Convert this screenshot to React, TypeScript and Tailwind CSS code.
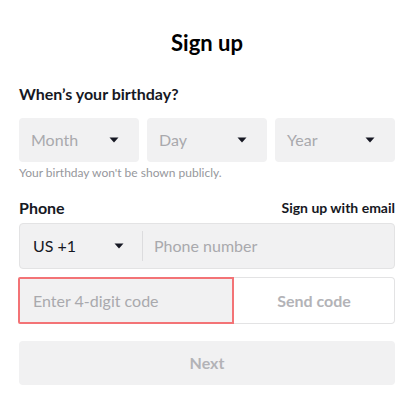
import React from "react";

function Caret() {
  return (
    <svg width="10" height="6" viewBox="0 0 10 6" className="shrink-0" aria-hidden>
      <path d="M0.5 0.5h9L5 5.5z" fill="#161823" />
    </svg>
  );
}

function SelectBox({ label }: { readonly label: string }) {
  return (
    <div className="flex h-[44px] flex-1 items-center justify-between rounded-[4px] bg-[#f1f1f2] pl-[12px] pr-[20px]">
      <span className="text-[16px] text-[#a9a9ad]">{label}</span>
      <Caret />
    </div>
  );
}

export default function App() {
  return (
    <div className="min-h-[406px] w-[417px] bg-white pl-[19px] pr-[22px] text-[#161823] [font-family:Lato,'Open_Sans',sans-serif]">
      <h2 className="pt-[28px] text-center text-[22px] font-bold leading-[30px] text-black">Sign up</h2>

      <div className="mt-[26px] text-[16px] font-bold leading-[20px]">When’s your birthday?</div>
      <div className="mt-[14px] flex gap-[8px]">
        <SelectBox label="Month" />
        <SelectBox label="Day" />
        <SelectBox label="Year" />
      </div>
      <p className="mt-[3px] text-[12px] leading-[16px] text-[#96979c]">Your birthday won't be shown publicly.</p>

      <div className="mt-[17px] flex items-center justify-between leading-[20px]">
        <span className="text-[16px] font-bold">Phone</span>
        <span className="text-[14px] font-bold">Sign up with email</span>
      </div>

      <div className="mt-[5px] flex h-[46px] items-center rounded-[4px] border border-[#e3e3e4] bg-[#f1f1f2]">
        <div className="flex w-[122px] items-center justify-between pl-[13px] pr-[18px]">
          <span className="text-[16px]">US +1</span>
          <Caret />
        </div>
        <div className="h-[30px] w-px bg-[#dcdcde]" />
        <span className="pl-[11px] text-[16px] text-[#a9a9ad]">Phone number</span>
      </div>

      <div className="mt-[8px] flex h-[47px]">
        <div className="-ml-px flex w-[216px] items-center rounded-l-[2px] border-2 border-[#f37376] bg-[#f1f1f2] pl-[13px]">
          <span className="text-[16px] text-[#a9a9ad]">Enter 4-digit code</span>
        </div>
        <div className="flex flex-1 items-center justify-center rounded-r-[4px] border border-l-0 border-[#e3e3e4]">
          <span className="text-[16px] font-bold text-[#b3b3b7]">Send code</span>
        </div>
      </div>

      <button
        type="button"
        className="mt-[17px] flex h-[44px] w-full items-center justify-center rounded-[4px] bg-[#f1f1f2] text-[16px] font-bold text-[#b3b3b7]"
      >
        Next
      </button>
    </div>
  );
}
